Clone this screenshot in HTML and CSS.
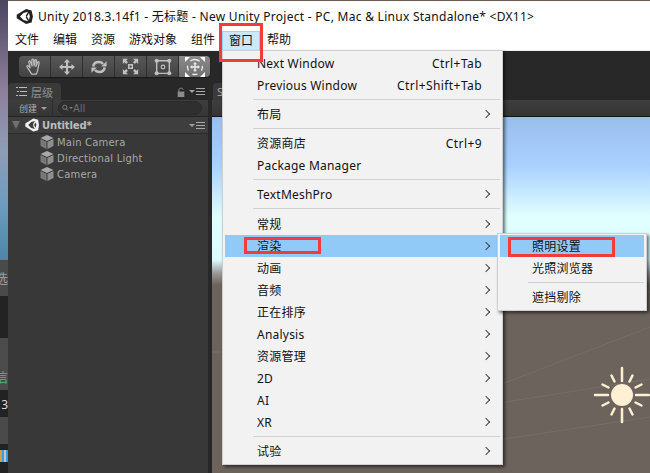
FILE: index.html
```html
<!DOCTYPE html>
<html lang="zh-CN">
<head>
    <meta charset="UTF-8">
    <meta name="viewport" content="width=device-width, initial-scale=1.0">
    <title>Unity 2018.3.14f1</title>
    <link rel="stylesheet" href="styles.css">
</head>
<body>
    <div class="screen">
        <div class="behind">
            <div class="wallpaper"></div>
            <div class="strip-row strip-grey-a"><span class="cut cut-grey">选</span></div>
            <div class="strip-row strip-dark-a"></div>
            <div class="strip-row strip-grey-b"><span class="cut cut-green">信</span></div>
            <div class="strip-row strip-dark-b"><span class="cut cut-white">3</span></div>
            <div class="strip-row strip-grey-c"></div>
            <div class="strip-row strip-dark-c">
                <i class="bar bar-a"></i><i class="bar bar-b"></i><i class="bar bar-c"></i><i class="bar bar-b"></i>
            </div>
        </div>

        <div class="window">
            <div class="titlebar">
                <svg class="unity-logo" width="17" height="17" viewBox="0 0 24 24"><path fill="#222" d="M14.2 1.5 22 3.6l1.9 8.4-1.9 8.4-7.8 2.1L1 14.6V9.4zM5.6 12l5 5.1 6.4 1.7-3.3-5.7 1-1.1-1-1.1L17 5.2l-6.4 1.7zm9.9 0 2.8 4.8L19.5 12l-1.2-4.8z"/></svg>
                <span class="title-text">Unity 2018.3.14f1 - 无标题 - New Unity Project - PC, Mac &amp; Linux Standalone* &lt;DX11&gt;</span>
            </div>

            <div class="menubar">
                <span class="menubar-item">文件</span>
                <span class="menubar-item">编辑</span>
                <span class="menubar-item">资源</span>
                <span class="menubar-item">游戏对象</span>
                <span class="menubar-item">组件</span>
                <span class="menubar-item active">窗口</span>
                <span class="menubar-item">帮助</span>
            </div>

            <div class="toolbar">
                <div class="tools">
                    <span class="tool">
                        <svg width="19" height="19" viewBox="0 0 20 20" fill="none" stroke="#bdbdbd" stroke-width="1.3" stroke-linejoin="round" stroke-linecap="round"><path d="M7 18 3.5 12.5c-.8-1.2-2-2.6-1.4-3.2.7-.6 2 .5 3.300 2L4 5.500c-.3-1.300 1.200-1.800 1.700-.6L7.400 9.500 7.200 3.200c0-1.400 1.700-1.400 1.800 0l.6 6.100.8-5.700c.2-1.300 1.800-1.100 1.700.2l-.6 6.200 1.700-4.300c.5-1.200 2-.7 1.700.5L13.500 13c-.4 2-.8 3-1.500 5z"/></svg>
                    </span>
                    <span class="tool">
                        <svg width="16" height="16" viewBox="0 0 18 18" fill="#c0c0c0"><path d="M9 0 12.500 4H10.200V7.800H14V5.500L18 9 14 12.500V10.200H10.200V14H12.500L9 18 5.500 14H7.800V10.200H4V12.500L0 9 4 5.500V7.800H7.800V4H5.500z"/></svg>
                    </span>
                    <span class="tool">
                        <svg width="16" height="16" viewBox="0 0 18 18" fill="none" stroke="#c0c0c0" stroke-width="2.800"><path d="M2.500 8.500C3 5.500 5.500 3.500 8.800 3.500c2.200 0 3.700.8 4.700 2.200"/><path d="M15.500 9.500c-.5 3-3 5-6.300 5-2.200 0-3.700-.8-4.700-2.200"/><path fill="#c0c0c0" stroke="none" d="M17.500 2.500v6h-6zM.5 15.500v-6h6z"/></svg>
                    </span>
                    <span class="tool">
                        <svg width="17" height="17" viewBox="0 0 20 20" fill="#c0c0c0"><path d="M7 7h6v6H7z M8.800 8.800v2.400h2.400V8.800z" fill-rule="evenodd"/><path d="M1 1h6L5 3l2 2-2 2-2-2-2 2zM19 1v6l-2-2-2 2-2-2 2-2-2-2zM1 19v-6l2 2 2-2 2 2-2 2 2 2zM19 19h-6l2-2-2-2 2-2 2 2 2-2z"/></svg>
                    </span>
                    <span class="tool">
                        <svg width="18" height="18" viewBox="0 0 20 20" fill="#c0c0c0"><path fill="none" stroke="#c0c0c0" stroke-width="1.500" d="M3 3h14v14H3z"/><circle cx="3" cy="3" r="2.300"/><circle cx="17" cy="3" r="2.300"/><circle cx="3" cy="17" r="2.300"/><circle cx="17" cy="17" r="2.300"/><circle cx="10" cy="10" r="2" fill="none" stroke="#c0c0c0" stroke-width="1.300"/></svg>
                    </span>
                    <span class="tool tool-on">
                        <svg width="22" height="22" viewBox="0 0 22 22"><path fill="none" stroke="#eee" stroke-width="1.300" stroke-dasharray="5 5.400" d="M11 3.500a7.500 7.500 0 1 1-.1 0z"/><path fill="#eee" d="M11 6 13 8.300H11.700V10.300H13.700V9L16 11 13.700 13V11.700H11.700V13.700H13L11 16 9 13.700H10.300V11.700H8.300V13L6 11 8.300 9V10.300H10.300V8.300H9z"/><path fill="#fff" d="M1 1h5L1 6zM21 1v5L16 1zM1 21v-5l5 5zM21 21h-5l5-5z"/></svg>
                    </span>
                </div>
            </div>

            <div class="panels">
                <section class="hierarchy">
                    <div class="tabstrip">
                        <div class="tab">
                            <svg width="11" height="9" viewBox="0 0 11 9" fill="#bbb"><path d="M0 0h2v1H0zM3 0h8v1H3zM1 4h2v1H1zM4 4h7v1H4zM0 8h2v1H0zM3 8h8v1H3z"/></svg>
                            <span>层级</span>
                        </div>
                        <div class="tab-tools">
                            <svg class="lock" width="8" height="10" viewBox="0 0 9 12"><path fill="none" stroke="#8c8c8c" stroke-width="1.200" d="M2 6V3.200C2 .8 7 .8 7 3.200"/><path fill="#8c8c8c" d="M.5 5.500h8V12h-8z"/></svg>
                            <span class="caret"></span>
                            <span class="hamburger"></span>
                        </div>
                    </div>
                    <div class="panel-bar">
                        <span class="create">创建 <i class="caret"></i></span>
                        <div class="search">
                            <svg width="7" height="8" viewBox="0 0 10 10" fill="none" stroke="#808080" stroke-width="1.300"><circle cx="4" cy="4" r="3"/><path d="M6.200 6.200 9 9"/></svg>
                            <i class="caret caret-small"></i>
                            <span>All</span>
                        </div>
                    </div>
                    <div class="scene-row">
                        <span class="fold"></span>
                        <svg class="scene-logo" width="14" height="14" viewBox="0 0 24 24"><path fill="#f2f2f2" d="M14.200 1 22.500 3.200l1.500 8.800-1.500 8.800-8.300 2.200L.5 14.500v-5zM5.600 12l5 5.100 6.400 1.700-3.300-5.700 1-1.100-1-1.100L17 5.200l-6.400 1.700zm9.900 0 2.800 4.800L19.500 12l-1.200-4.800z"/></svg>
                        <b>Untitled*</b>
                        <span class="row-menu"><i class="caret"></i><i class="hamburger"></i></span>
                    </div>
                    <ul class="objects">
                        <li><svg class="cube" width="14" height="14" viewBox="0 0 14 14"><path fill="#a8a8a8" d="M7 0 13.500 3 7 6 .5 3z"/><path fill="#787878" d="M.5 4 6.500 6.800V14L.5 11z"/><path fill="#8e8e8e" d="M13.500 4 7.500 6.800V14L13.500 11z"/></svg>Main Camera</li>
                        <li><svg class="cube" width="14" height="14" viewBox="0 0 14 14"><path fill="#a8a8a8" d="M7 0 13.500 3 7 6 .5 3z"/><path fill="#787878" d="M.5 4 6.500 6.800V14L.5 11z"/><path fill="#8e8e8e" d="M13.500 4 7.500 6.800V14L13.500 11z"/></svg>Directional Light</li>
                        <li><svg class="cube" width="14" height="14" viewBox="0 0 14 14"><path fill="#a8a8a8" d="M7 0 13.500 3 7 6 .5 3z"/><path fill="#787878" d="M.5 4 6.500 6.800V14L.5 11z"/><path fill="#8e8e8e" d="M13.500 4 7.500 6.800V14L13.500 11z"/></svg>Camera</li>
                    </ul>
                </section>

                <section class="scene">
                    <div class="tabstrip scene-tabs"><div class="tab scene-tab">S</div></div>
                    <div class="panel-bar scene-bar"></div>
                    <div class="viewport">
                        <svg class="grid" width="438" height="356" viewBox="0 0 438 356" fill="none" stroke="#766e67" stroke-width="1">
                            <path d="M290 267 438 210M200 300 438 262M240 330 438 300M0 235h270M260 200 438 175"/>
                        </svg>
                        <svg class="sun" width="58" height="58" viewBox="0 0 58 58" stroke="#fff0d4" stroke-linecap="round" fill="none">
                            <circle cx="29" cy="29" r="11" fill="#fff0d4" stroke="none"/>
                            <g stroke-width="2.500">
                                <path d="M29 2V15M29 43V56M2 29H15M43 29H56"/>
                                <path d="M18.500 9.500 21.500 15.500M39.500 9.500 36.500 15.500M18.500 48.500 21.500 42.500M39.500 48.500 36.500 42.500M9.500 18.500 15.500 21.500M48.500 18.500 42.500 21.500M9.500 39.500 15.500 36.500M48.500 39.500 42.500 36.500"/>
                            </g>
                        </svg>
                    </div>
                </section>
            </div>
        </div>

        <div class="menu main-menu">
            <div class="item en"><span>Next Window</span><em>Ctrl+Tab</em></div>
            <div class="item en"><span>Previous Window</span><em>Ctrl+Shift+Tab</em></div>
            <hr>
            <div class="item more"><span>布局</span></div>
            <hr>
            <div class="item"><span>资源商店</span><em>Ctrl+9</em></div>
            <div class="item en"><span>Package Manager</span></div>
            <hr>
            <div class="item en more"><span>TextMeshPro</span></div>
            <hr>
            <div class="item more"><span>常规</span></div>
            <div class="item more on"><span>渲染</span></div>
            <div class="item more"><span>动画</span></div>
            <div class="item more"><span>音频</span></div>
            <div class="item more"><span>正在排序</span></div>
            <div class="item en more"><span>Analysis</span></div>
            <div class="item more"><span>资源管理</span></div>
            <div class="item en more"><span>2D</span></div>
            <div class="item en more"><span>AI</span></div>
            <div class="item en more"><span>XR</span></div>
            <hr>
            <div class="item more"><span>试验</span></div>
        </div>

        <div class="menu sub-menu">
            <div class="item on"><span>照明设置</span></div>
            <div class="item"><span>光照浏览器</span></div>
            <hr>
            <div class="item"><span>遮挡剔除</span></div>
        </div>

        <div class="mark mark-window"></div>
        <div class="mark mark-render"></div>
        <div class="mark mark-light"></div>
    </div>
</body>
</html>
```

FILE: styles.css
```css
* {margin: 0; padding: 0; box-sizing: border-box;}
html, body {height: 100%; overflow: hidden;}
body {font: 12px "Noto Sans", "Noto Sans CJK SC", sans-serif; color: #111;}

.screen {position: relative; display: flex; width: 650px; height: 473px; overflow: hidden;}

/* what shows left of the window */
.behind {width: 8px; display: flex; flex-direction: column; flex: none;}
.wallpaper {height: 260px; background: linear-gradient(#4b4560, #8d7f9c 90px, #8f9cb6 150px, #6c9cbf 205px, #4c86a8);}
.strip-row {display: flex; justify-content: flex-end; overflow: hidden; white-space: nowrap;}
.strip-grey-a {height: 36px; background: #4a4a4a;}
.strip-dark-a {height: 42px; background: #232323;}
.strip-grey-b {height: 52px; background: #4c4c4c;}
.strip-dark-b {height: 27px; background: #222;}
.strip-grey-c {height: 27px; background: #4a4a4a;}
.strip-dark-c {flex: 1; background: #222; align-items: flex-start; padding-top: 6px; gap: 0;}
.cut {flex: none; font-size: 13px; line-height: 16px;}
.cut-grey {color: #a09c96; margin-top: 10px;}
.cut-green {color: #58b878; margin-top: 31px;}
.cut-white {color: #d8d8d8; margin-top: 7px; font-size: 12px;}
.bar {display: block; width: 2px; height: 12px; flex: none;}
.bar-a {background: #d0a050;}
.bar-b {background: #3a9cd8;}
.bar-c {background: #c8c8c8;}

.window {flex: 1; display: flex; flex-direction: column; min-width: 0;}

.titlebar {height: 30px; margin-top: 1px; padding-left: 8px; display: flex; align-items: center; gap: 5px; background: #fff; box-shadow: 0 -1px 0 #6b5c4e;}
.title-text {font-size: 12px; letter-spacing: 0.27px; white-space: nowrap;}

.menubar {height: 19px; display: flex; background: #fff;}
.menubar-item {padding: 0 7px; line-height: 18px; font-size: 12px;}
.menubar-item.active {background: #cce8ff; border: 1px solid #99d1ff; border-bottom: 0; padding: 0 6px; line-height: 17px;}

.toolbar {height: 33px; padding: 5px 0 0 11px; background: #282828; border-top: 1px solid #f0f0f0;}
.tools {display: flex; width: 191px; height: 21px; border-radius: 4px; overflow: hidden; box-shadow: 0 1px 1px #1a1a1a;}
.tool {flex: 1; display: flex; align-items: center; justify-content: center; background: linear-gradient(#585858, #424242); border-right: 1px solid #2e2e2e;}
.tool:last-child {border-right: 0;}
.tool-on {background: linear-gradient(#8b8b8b, #707070);}

.panels {flex: 1; display: flex; background: #282828; min-height: 0;}
.hierarchy {width: 200px; display: flex; flex-direction: column; background: #383838; flex: none;}
.scene {flex: 1; margin-left: 4px; display: flex; flex-direction: column; min-width: 0;}

.tabstrip {height: 17px; display: flex; justify-content: space-between; background: #282828;}
.tab {width: 53px; display: flex; align-items: center; gap: 4px; padding-left: 8px; background: #3a3a3a; border-radius: 4px 4px 0 0; color: #909090; font-size: 11px;}
.tab-tools {display: flex; align-items: center; padding-right: 3px;}
.lock {margin-right: 4px;}
.caret {display: inline-block; width: 0; height: 0; border: 3px solid transparent; border-top: 3px solid #a0a0a0; border-bottom: 0; margin-right: 1px;}
.caret-small {border-top-color: #808080; border-width: 2px; border-bottom: 0; margin: 0;}
.hamburger {display: inline-block; width: 9px; height: 7px; border-top: 1px solid #a8a8a8; border-bottom: 1px solid #a8a8a8;}
.hamburger::after {content: ""; display: block; height: 1px; margin-top: 2px; background: #a8a8a8;}

.panel-bar {height: 17px; display: flex; align-items: center; background: linear-gradient(#3e3e3e, #353535); border-bottom: 1px solid #232323;}
.create {width: 45px; height: 100%; padding-left: 11px; display: flex; align-items: center; gap: 4px; color: #b0b0b0; font-size: 9px; border-right: 1px solid #2c2c2c; white-space: nowrap;}
.search {width: 144px; height: 14px; margin-left: 5px; padding-left: 3px; display: flex; align-items: center; background: #2f2f2f; border-radius: 7px; border: 1px solid #2a2a2a; color: #707070; font: 10px "DejaVu Sans", sans-serif;}

.scene-row {height: 17px; display: flex; align-items: center; background: #3e3e3e; border-bottom: 1px solid #2a2a2a; color: #bcbcbc; font: bold 10px "DejaVu Sans", sans-serif; letter-spacing: -0.15px;}
.fold {width: 0; height: 0; margin-left: 4px; border: 4px solid transparent; border-top: 8px solid #707070; border-bottom: 0;}
.scene-logo {margin-left: 5px; margin-right: 3px;}
.row-menu {margin-left: auto; margin-right: 3px; display: flex; align-items: center;}

.objects {list-style: none; color: #a8a8a8; font: 10px "DejaVu Sans", sans-serif; letter-spacing: 0.2px;}
.objects li {height: 16px; display: flex; align-items: center; padding-left: 32px;}
.cube {margin-right: 3px;}

.scene-tab {width: 40px; margin-left: 1px; color: #a8a8a8; padding-left: 4px;}
.scene-bar {border-bottom: 1px solid #161616;}
.viewport {position: relative; flex: 1; overflow: hidden; background: linear-gradient(#9abdec, #a9d0ff 48px, #e0ffff 100px, #dcfbff 143px, #9a9a98 156px, #6b635c 168px);}
.grid {position: absolute; left: 0; top: 0;}
.sun {position: absolute; left: 381px; top: 249px;}

/* popup menus */
.menu {position: absolute; background: #f2f2f2; border: 1px solid #cfcfcf; box-shadow: 2px 2px 3px rgba(0, 0, 0, 0.55); padding: 1px 2px 2px; font-size: 12px; color: #111;}
.main-menu {left: 222px; top: 50px; width: 281px; padding-top: 0.5px;}
.sub-menu {left: 497px; top: 233px; width: 150px; padding-top: 1px;}
.item {position: relative; height: 22px; display: flex; justify-content: space-between; align-items: center; padding-left: 32px; padding-right: 18px; white-space: nowrap; letter-spacing: 0.22px;}
.item.en {padding-top: 1px;}
.item em {font-style: normal; letter-spacing: 0.42px;}
.item.on {background: #91c9f7;}
.more::after {content: ""; position: absolute; right: 11px; top: 8px; width: 5px; height: 5px; border-top: 1px solid #444; border-right: 1px solid #444; transform: rotate(45deg);}
.menu hr {height: 7.25px; margin-left: 28px; border: 0; background: linear-gradient(#d0d0d0, #d0d0d0) center / 100% 1px no-repeat;}

/* red boxes drawn on the screenshot */
.mark {position: absolute; border: 3px solid #f23b3b;}
.mark-window {left: 219px; top: 23px; width: 44px; height: 39px;}
.mark-render {left: 244px; top: 237px; width: 77px; height: 17px;}
.mark-light {left: 508px; top: 237px; width: 107px; height: 20px;}
```
